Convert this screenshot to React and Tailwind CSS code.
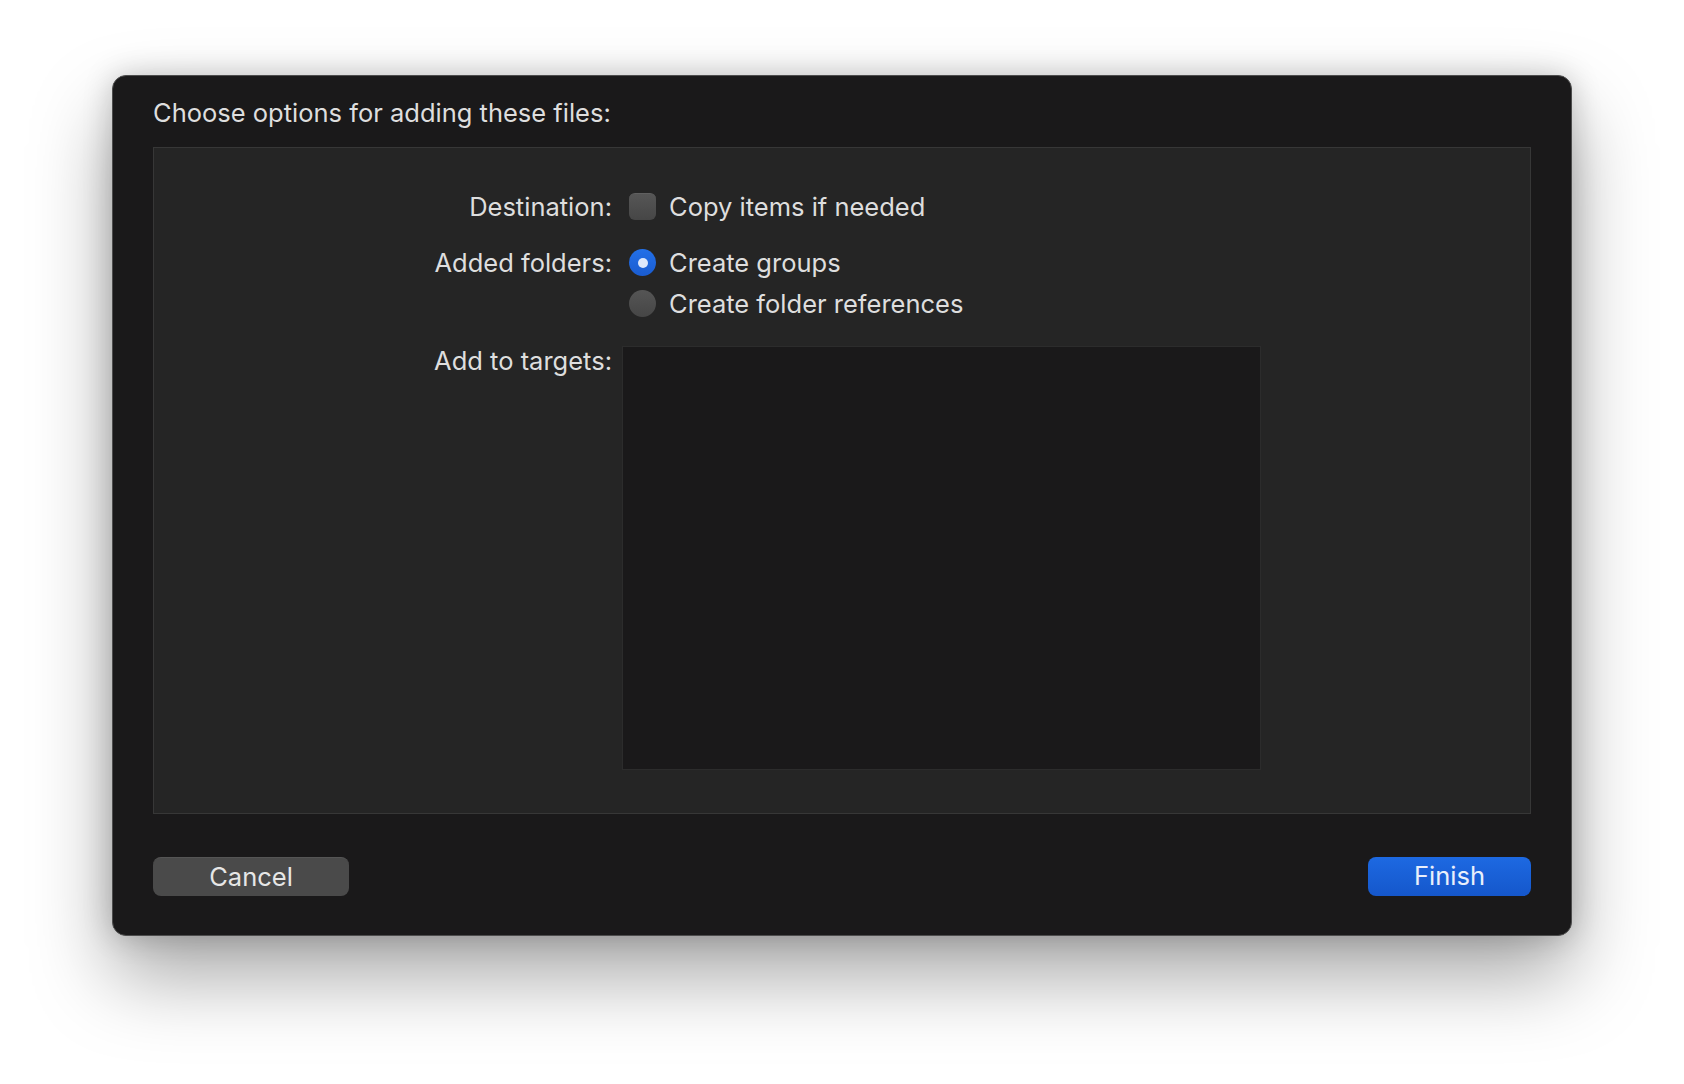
export default function App() {
  const font = { fontFamily: 'Inter, "Noto Sans", "Liberation Sans", sans-serif' };
  return (
    <div className="w-[1684px] h-[1084px] bg-white pt-[75px] pl-[112px]" style={font}>
      <div className="w-[1460px] h-[861px] rounded-[14px] bg-[#1a191a] border border-[#4d4d4d] shadow-[0_40px_80px_rgba(0,0,0,0.35),0_0_30px_rgba(0,0,0,0.2)] flex flex-col px-[40px]">
        <div className="pt-[22px] h-[71px] text-[25.5px] leading-[30px] text-[#dedede]">Choose options for adding these files:</div>
        <div className="h-[667px] bg-[#252525] border border-[#373737] flex flex-col pt-[45px] text-[25.5px] leading-[30px] text-[#dedede]">
          <div className="flex items-center h-[27px]">
            <div className="w-[458px] text-right">Destination:</div>
            <div className="ml-[17px] flex items-center">
              <div className="w-[27px] h-[27px] rounded-[6px] bg-gradient-to-b from-[#565656] to-[#464646] border-t border-[#606060]" />
              <span className="ml-[13px]">Copy items if needed</span>
            </div>
          </div>
          <div className="flex items-center h-[27px] mt-[29px]">
            <div className="w-[458px] text-right">Added folders:</div>
            <div className="ml-[17px] flex items-center">
              <div className="w-[27px] h-[27px] rounded-full bg-gradient-to-b from-[#2370e8] to-[#1a5cd0] flex items-center justify-center">
                <div className="w-[10px] h-[10px] rounded-full bg-[#dde8fb]" />
              </div>
              <span className="ml-[13px]">Create groups</span>
            </div>
          </div>
          <div className="flex items-center h-[27px] mt-[14px]">
            <div className="w-[458px]" />
            <div className="ml-[17px] flex items-center">
              <div className="w-[27px] h-[27px] rounded-full bg-gradient-to-b from-[#555555] to-[#464646]" />
              <span className="ml-[13px]">Create folder references</span>
            </div>
          </div>
          <div className="flex items-start mt-[29px]">
            <div className="w-[458px] text-right">Add to targets:</div>
            <div className="ml-[10px] w-[639px] h-[424px] bg-[#1a191a] border border-[#2c2c2c]" />
          </div>
        </div>
        <div className="flex justify-between items-center mt-[43px]">
          <div className="w-[196px] h-[39px] rounded-[8px] bg-[#4a4a4a] border-t border-[#555] flex items-center justify-center text-[25.5px] text-[#e6e6e6]">Cancel</div>
          <div className="w-[163px] h-[39px] rounded-[8px] bg-gradient-to-b from-[#1d69e2] to-[#1557cb] flex items-center justify-center text-[25.5px] text-[#e9effb]">Finish</div>
        </div>
      </div>
    </div>
  );
}
